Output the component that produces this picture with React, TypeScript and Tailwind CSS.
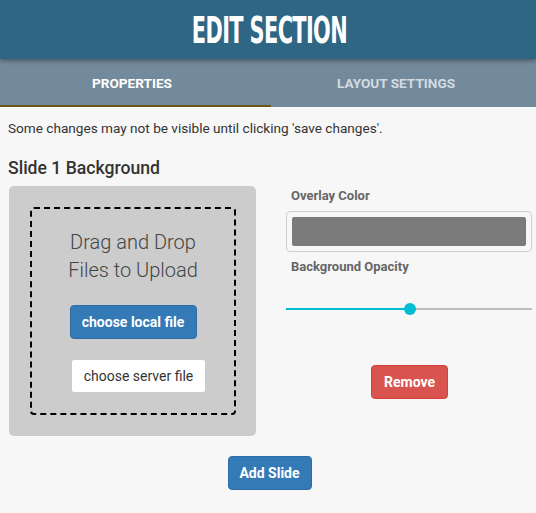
import React from "react";

export default function App() {
  return (
    <div className="w-[536px] h-[513px] bg-[#f7f7f7] overflow-hidden" style={{ fontFamily: "Roboto, 'Liberation Sans', sans-serif" }}>
      <div className="relative z-10 h-[59px] bg-[#2e6684] flex items-center justify-center shadow-[0_2px_4px_rgba(0,0,0,0.35)]">
        <span
          className="text-white font-bold text-[38px] leading-none tracking-[-1px] scale-x-[0.61] whitespace-nowrap pt-[1px] pl-[4px]"
          style={{ fontFamily: "'DejaVu Sans Condensed', 'DejaVu Sans', sans-serif" }}
        >
          EDIT SECTION
        </span>
      </div>
      <div className="h-[48px] bg-[#738a9c] flex">
        <div className="w-[270px] flex flex-col">
          <div className="flex-1 flex items-center justify-center text-white font-bold text-[13.6px] pt-[2px] pr-[6px]">PROPERTIES</div>
          <div className="h-[2px] bg-[#6b5518] w-[271px]" />
        </div>
        <div className="flex-1 flex items-center justify-center text-[#d3dbe2] font-bold text-[13.6px] pr-[14px]">LAYOUT SETTINGS</div>
      </div>
      <div className="pl-[8px]">
        <p className="mt-[11px] text-[13.6px] leading-[20px] text-[#333]">Some changes may not be visible until clicking 'save changes'.</p>
        <h2 className="mt-[19px] text-[17.6px] leading-[22px] font-medium text-[#333]">Slide 1 Background</h2>
        <div className="mt-[7px] flex">
          <div className="ml-[1px] w-[247px] h-[250px] bg-[#cccccc] rounded-[5px] p-[21px] pr-[20px]">
            <div className="h-[208px] border-2 border-dashed border-black rounded-[4px] flex flex-col items-center">
              <div className="mt-[19px] text-center text-[20px] leading-[28px] font-light text-[#444]">
                Drag and Drop<br />Files to Upload
              </div>
              <button className="mt-[21px] w-[127px] h-[34px] bg-[#337ab7] text-white font-bold text-[14px] rounded-[4px] border border-[#2e6da4]">choose local file</button>
              <button className="mt-[21px] ml-[11px] w-[133px] h-[32px] bg-white text-[#333] text-[14px] rounded-[2px]">choose server file</button>
            </div>
          </div>
          <div className="ml-[30px] w-[246px] flex flex-col">
            <div className="mt-[2px] pl-[5px] text-[13px] leading-[16px] font-bold text-[#666]">Overlay Color</div>
            <div className="mt-[7px] h-[41px] border border-[#cfcfcf] rounded-[4px] p-[5px] bg-[#f7f7f7]">
              <div className="h-full bg-[#7b7b7b] rounded-[2px]" />
            </div>
            <div className="mt-[7px] pl-[5px] text-[13px] leading-[16px] font-bold text-[#666]">Background Opacity</div>
            <div className="relative mt-[27px] h-[14px] flex items-center">
              <div className="h-[2px] w-[124px] bg-[#00bcd4]" />
              <div className="h-[2px] flex-1 bg-[#bdbdbd]" />
              <div className="absolute left-[118px] top-[1px] w-[12px] h-[12px] rounded-full bg-[#00bcd4]" />
            </div>
            <div className="flex justify-center mt-[49px] pl-[1px]">
              <button className="w-[77px] h-[34px] bg-[#d9534f] border border-[#d43f3a] text-white font-bold text-[14px] rounded-[4px]">Remove</button>
            </div>
          </div>
        </div>
        <div className="flex justify-center mt-[20px] pr-[5px]">
          <button className="w-[84px] h-[34px] bg-[#337ab7] border border-[#2e6da4] text-white font-bold text-[14px] rounded-[4px]">Add Slide</button>
        </div>
      </div>
    </div>
  );
}
